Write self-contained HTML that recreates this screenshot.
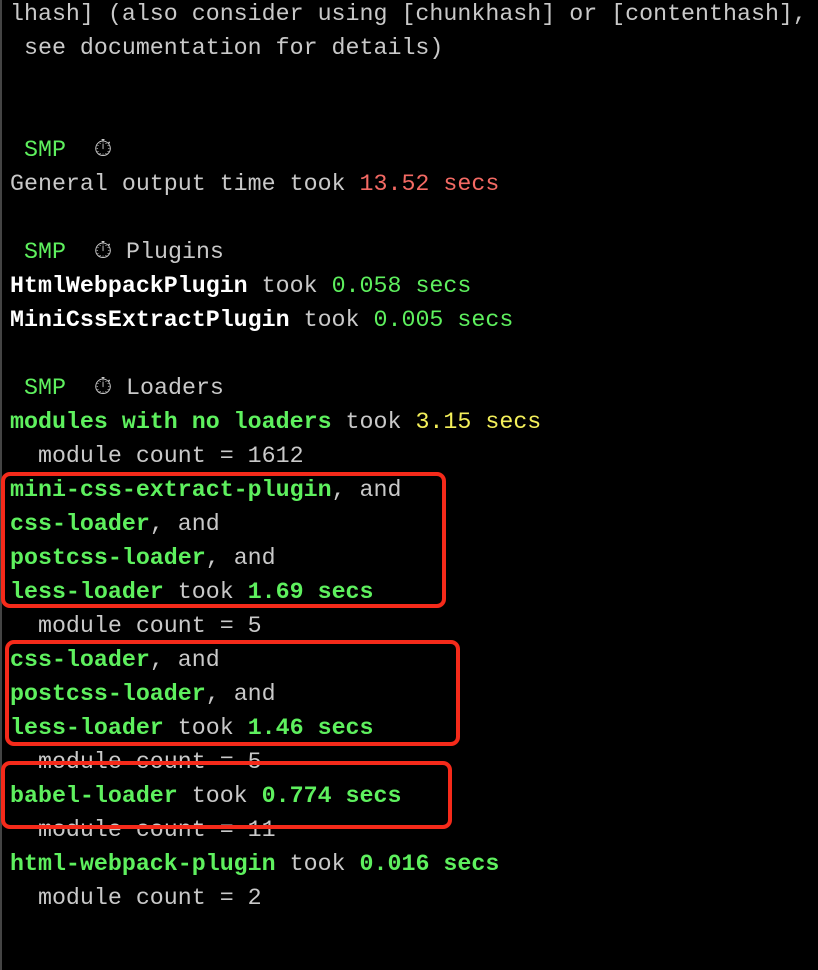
<!DOCTYPE html>
<html><head><style>
html,body{margin:0;padding:0;background:#000;width:818px;height:970px;overflow:hidden}
body{position:relative;font-family:"Liberation Mono",monospace;font-size:23.3px;color:#c9c9c9}
.l{position:absolute;left:10px;height:34px;line-height:34px;white-space:pre}
.g{color:#5ef05e;font-weight:bold}
.gn{color:#5ef05e}
.w{color:#fff;font-weight:bold}
.r{color:#f46a64}
.y{color:#f4f05a}
.bar{position:absolute;left:0;top:0;width:2px;height:970px;background:#444}
.box{position:absolute;border:4px solid #f52a1a;border-radius:9px;box-sizing:border-box}
</style></head><body>
<div class="bar"></div>
<div class="l" style="top:-3px;left:10px">lhash] (also consider using [chunkhash] or [contenthash],</div>
<div class="l" style="top:31px"> see documentation for details)</div>
<div class="l" style="top:133px"> <span class="gn">SMP</span>  ⏱</div>
<div class="l" style="top:167px">General output time took <span class="r">13.52 secs</span></div>
<div class="l" style="top:235px"> <span class="gn">SMP</span>  ⏱ Plugins</div>
<div class="l" style="top:269px"><span class="w">HtmlWebpackPlugin</span> took <span class="gn">0.058 secs</span></div>
<div class="l" style="top:303px"><span class="w">MiniCssExtractPlugin</span> took <span class="gn">0.005 secs</span></div>
<div class="l" style="top:371px"> <span class="gn">SMP</span>  ⏱ Loaders</div>
<div class="l" style="top:405px"><span class="g">modules with no loaders</span> took <span class="y">3.15 secs</span></div>
<div class="l" style="top:439px">  module count = 1612</div>
<div class="l" style="top:473px"><span class="g">mini-css-extract-plugin</span>, and</div>
<div class="l" style="top:507px"><span class="g">css-loader</span>, and</div>
<div class="l" style="top:541px"><span class="g">postcss-loader</span>, and</div>
<div class="l" style="top:575px"><span class="g">less-loader</span> took <span class="g">1.69 secs</span></div>
<div class="l" style="top:609px">  module count = 5</div>
<div class="l" style="top:643px"><span class="g">css-loader</span>, and</div>
<div class="l" style="top:677px"><span class="g">postcss-loader</span>, and</div>
<div class="l" style="top:711px"><span class="g">less-loader</span> took <span class="g">1.46 secs</span></div>
<div class="l" style="top:745px">  module count = 5</div>
<div class="l" style="top:779px"><span class="g">babel-loader</span> took <span class="g">0.774 secs</span></div>
<div class="l" style="top:813px">  module count = 11</div>
<div class="l" style="top:847px"><span class="g">html-webpack-plugin</span> took <span class="g">0.016 secs</span></div>
<div class="l" style="top:881px">  module count = 2</div>
<div class="box" style="left:1px;top:472px;width:445px;height:136px"></div>
<div class="box" style="left:5px;top:640px;width:455px;height:106px"></div>
<div class="box" style="left:1px;top:761px;width:451px;height:68px"></div>
</body></html>
